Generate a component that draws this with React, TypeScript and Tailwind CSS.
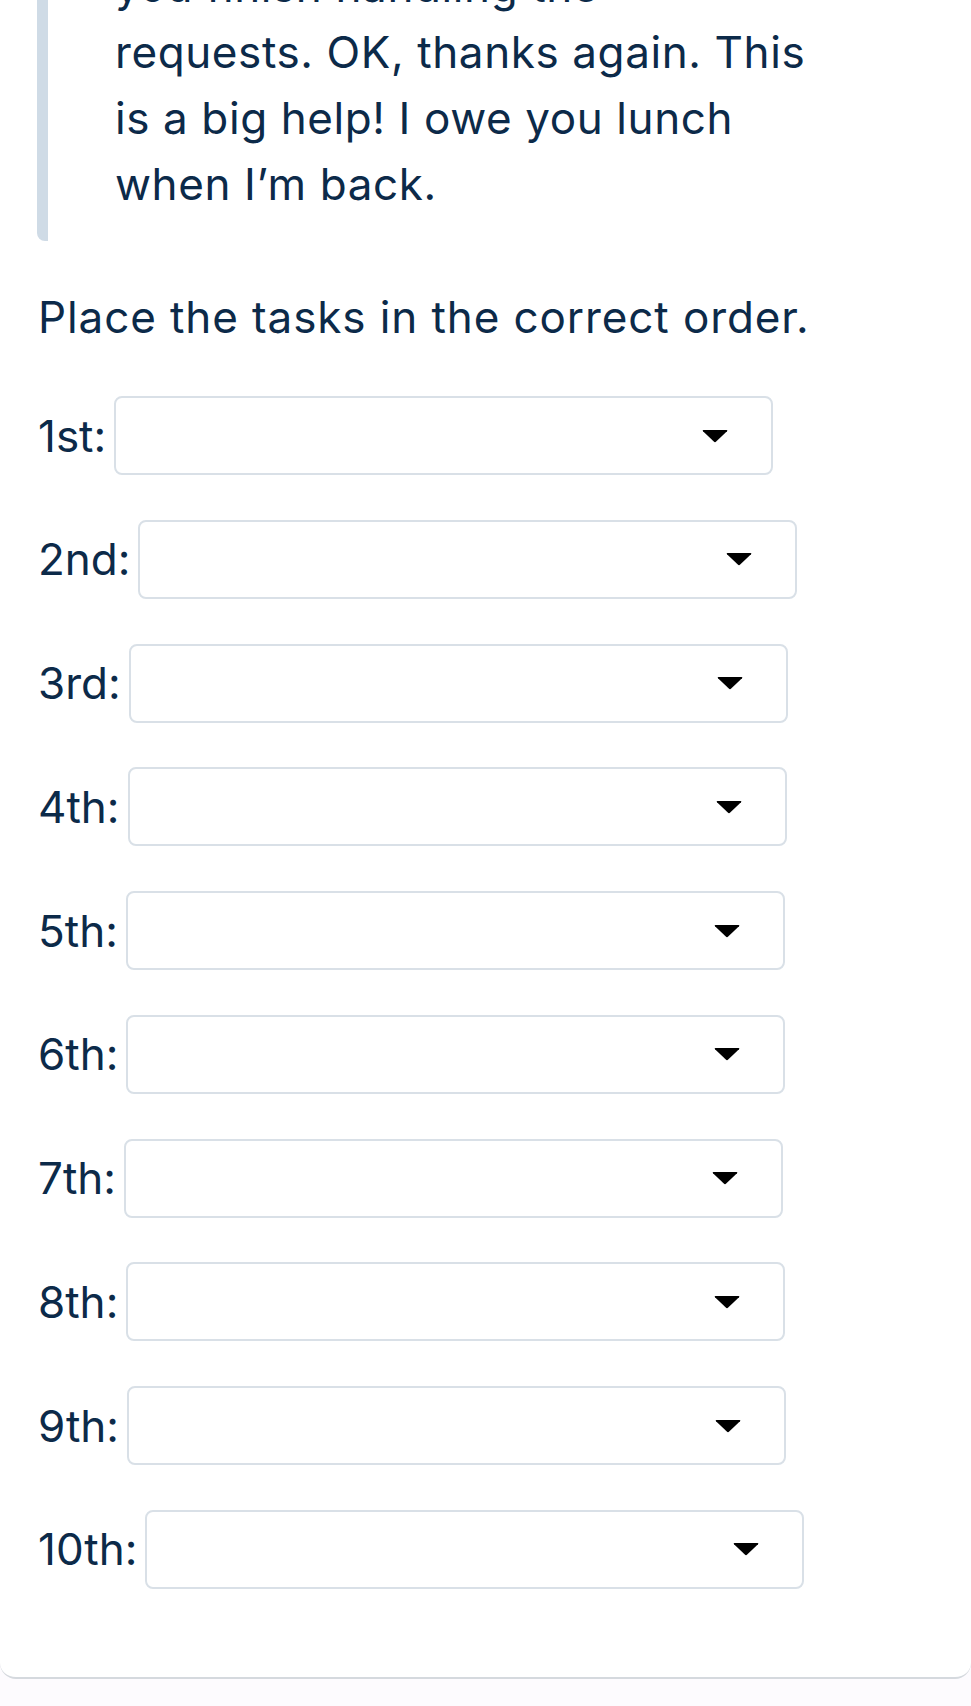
const quoteLines = [
  'you finish handling the',
  'requests. OK, thanks again. This',
  'is a big help! I owe you lunch',
  'when I\u2019m back.',
];

const slots = ['1st', '2nd', '3rd', '4th', '5th', '6th', '7th', '8th', '9th', '10th'];

function Caret() {
  return (
    <svg width="26" height="14" viewBox="0 0 26 14" aria-hidden="true">
      <path d="M1.5 1 H24.5 Q26 1 25 2.3 L14.2 12.6 Q13 13.7 11.8 12.6 L1 2.3 Q0 1 1.5 1 Z" fill="#000" />
    </svg>
  );
}

function OrderSelect({ label }: { label: string }) {
  return (
    <div className="flex items-center h-[79px]">
      <span className="mr-2">{label}:</span>
      <button
        type="button"
        className="flex items-center justify-end w-[659px] h-[79px] pr-[43px] bg-white border-2 border-[#d9e0e7] rounded-lg"
      >
        <Caret />
      </button>
    </div>
  );
}

export default function App() {
  return (
    <div
      className="min-h-screen bg-[#fdfbfe] text-[#0c2a49] text-[44px] leading-[66px]"
      style={{ fontFamily: 'Inter, "Noto Sans", sans-serif' }}
    >
      <div className="bg-white border-b-2 border-[#d5d9de] rounded-b-2xl overflow-hidden pb-[88px]">
        {/* Quote excerpt, scrolled partly out of view */}
        <div className="-mt-[47px] ml-[37px] border-l-[11px] border-[#cfdbe6] rounded-bl-lg pl-[67px] pb-6 tracking-[0.6px]">
          {quoteLines.map((line) => (
            <div key={line} className="whitespace-nowrap">
              {line}
            </div>
          ))}
        </div>

        <p className="mt-[43px] ml-[38px] tracking-[0.9px]">Place the tasks in the correct order.</p>

        <div className="mt-[46px] ml-[38px] flex flex-col gap-[44.75px]">
          {slots.map((s) => (
            <OrderSelect key={s} label={s} />
          ))}
        </div>
      </div>
    </div>
  );
}
